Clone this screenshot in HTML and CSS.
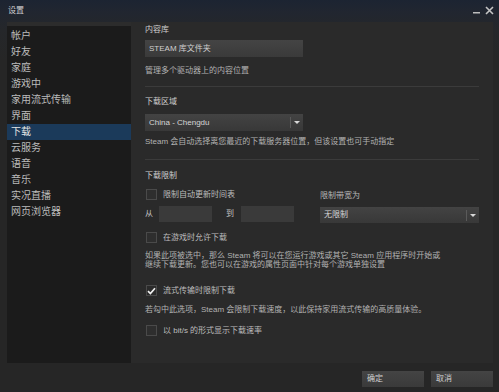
FILE: index.html
```html
<!DOCTYPE html>
<html lang="zh-CN">
<head>
<meta charset="utf-8">
<title>设置</title>
<link rel="stylesheet" href="styles.css">
</head>
<body>
<div class="window">
  <div class="titlebar">
    <span class="title">设置</span>
    <div class="winbtns">
      <svg class="min" width="7" height="3" viewBox="0 0 7 3"><rect x="0" y="1" width="7" height="1.5" fill="#bdbdbd"/></svg>
      <svg class="close" width="9" height="9" viewBox="0 0 9 9"><path d="M1 1 L8 8 M8 1 L1 8" stroke="#c4c4c4" stroke-width="1.6"/></svg>
    </div>
  </div>
  <div class="main">
    <nav class="sidebar">
      <div class="navitem">帐户</div>
      <div class="navitem">好友</div>
      <div class="navitem">家庭</div>
      <div class="navitem">游戏中</div>
      <div class="navitem">家用流式传输</div>
      <div class="navitem">界面</div>
      <div class="navitem active">下载</div>
      <div class="navitem">云服务</div>
      <div class="navitem">语音</div>
      <div class="navitem">音乐</div>
      <div class="navitem">实况直播</div>
      <div class="navitem">网页浏览器</div>
    </nav>
    <section class="panel">
      <div class="label l1">内容库</div>
      <div class="btn wide b1">STEAM 库文件夹</div>
      <div class="desc d1">管理多个驱动器上的内容位置</div>
      <div class="sep s1"></div>
      <div class="label l2">下载区域</div>
      <div class="select wide sel1"><span class="seltext">China - Chengdu</span><span class="selarrow"><i class="tri"></i></span></div>
      <div class="desc d2">Steam 会自动选择离您最近的下载服务器位置，但该设置也可手动指定</div>
      <div class="sep s2"></div>
      <div class="label l3">下载限制</div>
      <div class="limits">
        <div class="limleft">
          <div class="check c1"><span class="box"></span><span class="clabel">限制自动更新时间表</span></div>
          <div class="range">
            <span class="rlabel">从</span><span class="input"></span>
            <span class="rlabel to">到</span><span class="input"></span>
          </div>
        </div>
        <div class="limright">
          <div class="label bwlabel">限制带宽为</div>
          <div class="select sel2"><span class="seltext">无限制</span><span class="selarrow"><i class="tri"></i></span></div>
        </div>
      </div>
      <div class="check c2"><span class="box"></span><span class="clabel">在游戏时允许下载</span></div>
      <p class="para">如果此项被选中，那么 Steam 将可以在您运行游戏或其它 Steam 应用程序时开始或<br>继续下载更新。您也可以在游戏的属性页面中针对每个游戏单独设置</p>
      <div class="check c3"><span class="box checked"><svg width="9" height="8" viewBox="0 0 9 8"><path d="M1 4.2 L3.4 6.6 L8 1.2" fill="none" stroke="#f0f0f0" stroke-width="1.7"/></svg></span><span class="clabel">流式传输时限制下载</span></div>
      <div class="desc d3">若勾中此选项，Steam 会限制下载速度，以此保持家用流式传输的高质量体验。</div>
      <div class="check c4"><span class="box"></span><span class="clabel">以 bit/s 的形式显示下载速率</span></div>
    </section>
  </div>
  <div class="footer">
    <div class="btn fbtn">确定</div>
    <div class="btn fbtn">取消</div>
  </div>
</div>
</body>
</html>
```

FILE: styles.css
```css
* { box-sizing: border-box; margin: 0; padding: 0; }
html, body {
  width: 499px;
  height: 392px;
  overflow: hidden;
}
body {
  background: linear-gradient(180deg, #1c2432 0px, #212630 12px, #25272a 30px, #262626 60px);
  font-family: "Liberation Sans", "Noto Sans CJK SC", sans-serif;
  color: #c2c2c2;
}
.window {
  display: flex;
  flex-direction: column;
  height: 392px;
}
.titlebar {
  height: 22px;
  display: flex;
  justify-content: space-between;
  padding: 6px 5px 0 8px;
}
.title {
  font-size: 8px;
  line-height: 10px;
  color: #d0d0d0;
}
.winbtns {
  display: flex;
  align-items: flex-start;
  gap: 5px;
}
.winbtns .min { margin-top: 5px; }
.winbtns .close { margin-top: 0; }

.main {
  display: flex;
  height: 341px;
  margin-left: 7px;
  width: 486px;
}
.sidebar {
  width: 124px;
  background: #1b1b1b;
  border-top: 4px solid #2c2c2c;
  padding-top: 2px;
}
.navitem {
  height: 16px;
  line-height: 16px;
  font-size: 10px;
  padding-left: 4px;
  color: #bcbcbc;
}
.navitem.active {
  background: #1b3a5a;
  color: #e6e6e6;
}
.panel {
  flex: 1;
  background: #2a2a2a;
  padding: 3px 0 0 14px;
  display: flex;
  flex-direction: column;
  align-items: flex-start;
}
.label, .desc, .clabel, .rlabel, .para, .seltext {
  font-size: 8px;
  line-height: 10px;
}
.label { color: #cfcfcf; }
.desc { color: #b2b2b2; }
.wide { width: 158px; }
.btn {
  height: 17px;
  background: linear-gradient(180deg, #444 0%, #3a3a3a 100%);
  color: #cfcfcf;
  font-size: 8px;
  line-height: 17px;
  padding-left: 4px;
}
.b1 { margin-top: 5px; }
.d1 { margin-top: 9px; }
.sep {
  width: 334px;
  height: 1px;
  background: #3b3b3b;
}
.s1 { margin-top: 10px; }
.l2 { margin-top: 10px; }
.select {
  height: 17px;
  display: flex;
  align-items: center;
  justify-content: space-between;
  background: linear-gradient(180deg, #434343 0%, #383838 100%);
  color: #d4d4d4;
}
.seltext { padding-left: 4px; color: #d6d6d6; }
.selarrow {
  width: 13px;
  height: 11px;
  border-left: 1px solid #5a5a5a;
  display: flex;
  align-items: center;
  justify-content: center;
}
.tri {
  width: 0; height: 0;
  border-left: 3px solid transparent;
  border-right: 3px solid transparent;
  border-top: 3px solid #d8d8d8;
}
.sel1 { margin-top: 7px; }
.d2 { margin-top: 6px; }
.s2 { margin-top: 12px; }
.l3 { margin-top: 11px; }

.limits {
  display: flex;
  align-items: flex-start;
  width: 334px;
  margin-top: 8px;
}
.limleft { width: 175px; }
.limright {
  display: flex;
  flex-direction: column;
  padding-top: 2px;
}
.bwlabel { color: #b8b8b8; }
.sel2 { width: 159px; height: 16px; margin-top: 6px; }

.check {
  display: flex;
  align-items: center;
  gap: 6px;
  height: 11px;
  padding-left: 1px;
}
.box {
  width: 11px;
  height: 11px;
  border: 1px solid #4a4a4a;
  background: #2e2e2e;
  display: flex;
  align-items: center;
  justify-content: center;
}
.clabel { color: #bdbdbd; }
.range {
  display: flex;
  align-items: center;
  margin-top: 6px;
  height: 16px;
}
.rlabel { color: #c0c0c0; width: 14px; }
.rlabel.to { width: auto; margin-left: 14px; margin-right: 7px; }
.input {
  width: 53px;
  height: 16px;
  background: #3a3a3a;
}
.c2 { margin-top: 9px; }
.para {
  margin-top: 9px;
  line-height: 8.5px;
  color: #b2b2b2;
}
.c3 { margin-top: 16px; }
.box.checked { background: #2a2a2a; }
.d3 { margin-top: 9px; }
.c4 { margin-top: 10px; }

.footer {
  display: flex;
  justify-content: flex-end;
  gap: 7px;
  padding: 8px 6px 0 0;
}
.fbtn {
  width: 62px;
  height: 16px;
  line-height: 16px;
  padding-left: 5px;
}
```
